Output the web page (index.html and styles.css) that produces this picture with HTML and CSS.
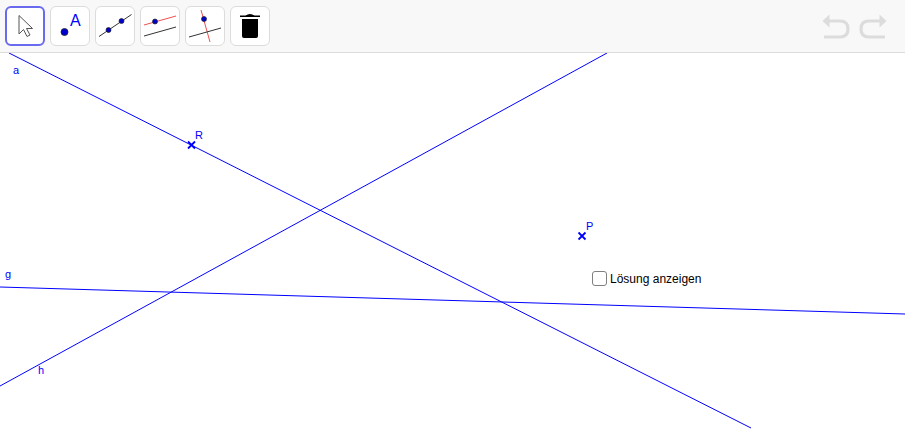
FILE: index.html
```html
<!DOCTYPE html>
<html lang="de">
<head>
  <meta charset="UTF-8">
  <title>Konstruktion</title>
  <link rel="stylesheet" href="styles.css">
</head>
<body>
  <div class="applet">
    <div class="toolbar">
      <div class="tools">
        <button class="tool active">
          <svg width="28" height="28" viewBox="0 0 28 28"><path d="M8 3.5 V22 L12.5 17.5 L16 24.5 L19 23 L15.5 16.5 H21.5 Z" fill="#fff" stroke="#555" stroke-width="1"/></svg>
        </button>
        <button class="tool">
          <svg width="38" height="38" viewBox="0 0 38 38"><circle cx="13.5" cy="25" r="3.5" fill="#00c" stroke="#222" stroke-width="0.8"/><text x="19" y="18.5" class="tool-letter">A</text></svg>
        </button>
        <button class="tool">
          <svg width="38" height="38" viewBox="0 0 38 38"><line x1="3" y1="29.5" x2="35.5" y2="7.5" stroke="#333" stroke-width="1"/><circle cx="12.5" cy="23" r="2.5" fill="#00c" stroke="#222" stroke-width="0.7"/><circle cx="25.5" cy="14" r="2.5" fill="#00c" stroke="#222" stroke-width="0.7"/></svg>
        </button>
        <button class="tool">
          <svg width="38" height="38" viewBox="0 0 38 38"><line x1="3" y1="18" x2="35" y2="9" stroke="#f05050" stroke-width="1"/><line x1="3" y1="29" x2="35" y2="20" stroke="#333" stroke-width="1"/><circle cx="14" cy="14.5" r="2.5" fill="#00c" stroke="#222" stroke-width="0.7"/></svg>
        </button>
        <button class="tool">
          <svg width="38" height="38" viewBox="0 0 38 38"><line x1="15" y1="3" x2="24" y2="35" stroke="#f05050" stroke-width="1"/><line x1="3" y1="30" x2="35" y2="21" stroke="#333" stroke-width="1"/><circle cx="18" cy="12" r="2.5" fill="#00c" stroke="#222" stroke-width="0.7"/></svg>
        </button>
        <button class="tool">
          <svg width="38" height="38" viewBox="0 0 38 38"><path d="M9 8.5 H29 V10 H9 Z M14.5 8.5 Q19 5.5 23.5 8.5 Z" fill="#000"/><path d="M11 12 H27 V29 Q27 31 25 31 H13 Q11 31 11 29 Z" fill="#000"/></svg>
        </button>
      </div>
      <div class="history">
        <svg width="28" height="28" viewBox="0 0 28 28"><path d="M5 9 H18 Q26 9 26 17 Q26 25 18 25 H2" fill="none" stroke="#dcdcdc" stroke-width="3.2"/><path d="M0.5 9 L7.5 2.5 V15.5 Z" fill="#dcdcdc"/></svg>
        <svg width="28" height="28" viewBox="0 0 28 28"><path d="M23 9 H10 Q2 9 2 17 Q2 25 10 25 H26" fill="none" stroke="#dcdcdc" stroke-width="3.2"/><path d="M27.5 9 L20.5 2.5 V15.5 Z" fill="#dcdcdc"/></svg>
      </div>
    </div>

    <div class="canvas">
      <svg class="board" width="907" height="377" viewBox="0 53 907 377">
        <line x1="9" y1="53" x2="751" y2="428"/>
        <line x1="0" y1="287" x2="905" y2="314"/>
        <line x1="0" y1="386" x2="607" y2="53"/>
        <path class="cross" d="M188 141.5 l7 7 m0 -7 l-7 7"/>
        <path class="cross" d="M578.5 232.5 l7 7 m0 -7 l-7 7"/>
        <text x="195" y="139">R</text>
        <text x="586" y="230">P</text>
        <text x="13" y="74">a</text>
        <text x="5" y="278">g</text>
        <text x="38" y="374">h</text>
      </svg>
      <label class="solution">
        <span class="checkbox"></span>
        <span>Lösung anzeigen</span>
      </label>
    </div>
  </div>
</body>
</html>
```

FILE: styles.css
```css
body {
  margin: 0;
  background: #fff;
  font-family: "Liberation Sans", Arial, sans-serif;
  overflow: hidden;
}

.applet {
  width: 905px;
  height: 430px;
  display: flex;
  flex-direction: column;
}

.toolbar {
  height: 53px;
  box-sizing: border-box;
  flex: none;
  display: flex;
  justify-content: space-between;
  padding: 6px 18px 0 5px;
  background: #f8f8f8;
  border-bottom: 1px solid #dcdcdc;
}

.tools {
  display: flex;
  gap: 5px;
  height: 40px;
}

.tool {
  width: 40px;
  height: 40px;
  box-sizing: border-box;
  padding: 0;
  display: flex;
  align-items: center;
  justify-content: center;
  background: #fff;
  border: 1px solid #dcdcdc;
  border-radius: 6px;
}

.tool.active {
  border: 2px solid #6a6aee;
}

.tool-letter {
  font-family: "Liberation Sans", Arial, sans-serif;
  font-size: 16px;
  fill: #00f;
}

.history {
  display: flex;
  gap: 9px;
  padding-top: 6px;
}

.canvas {
  position: relative;
  flex: 1;
}

.board {
  position: absolute;
  left: 0;
  top: 0;
}

.board line {
  stroke: #00f;
  stroke-width: 1;
}

.board text {
  font-family: "Liberation Sans", Arial, sans-serif;
  font-size: 11px;
  fill: #00f;
}

.cross {
  fill: none;
  stroke: #00f;
  stroke-width: 1.8;
}

.solution {
  position: absolute;
  left: 592px;
  top: 218px;
  display: flex;
  align-items: center;
  gap: 3px;
  font-size: 12px;
  color: #000;
}

.checkbox {
  width: 15px;
  height: 15px;
  box-sizing: border-box;
  background: #fff;
  border: 1.5px solid #808080;
  border-radius: 3px;
}
```
